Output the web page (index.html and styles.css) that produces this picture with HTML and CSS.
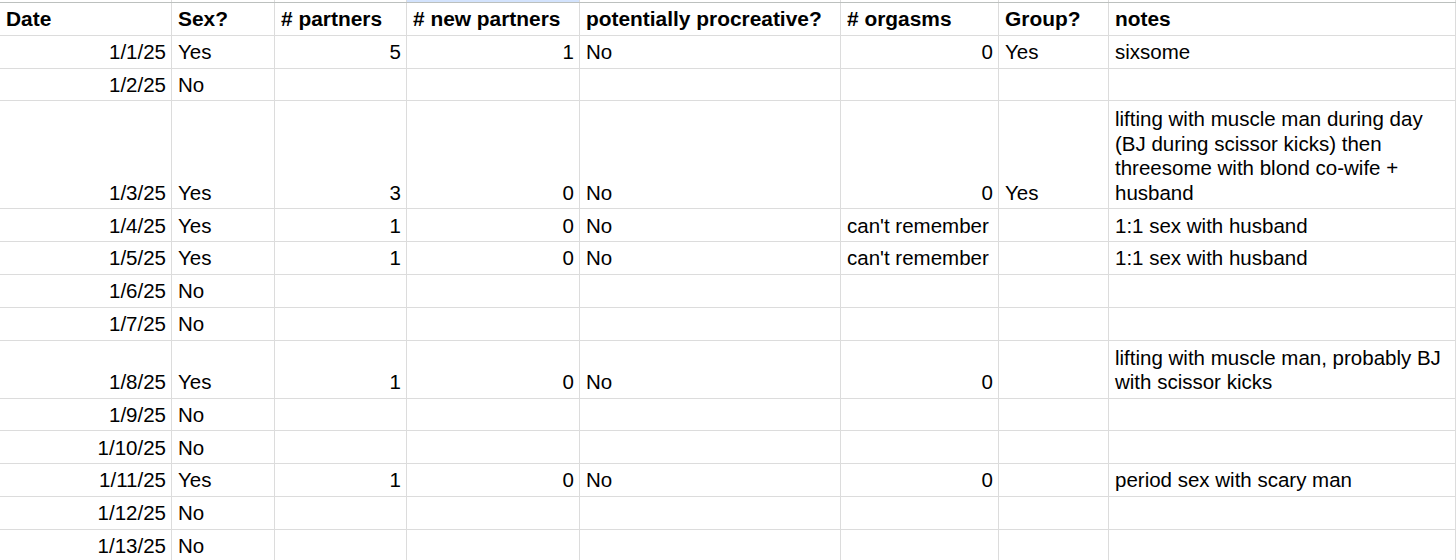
FILE: index.html
```html
<!DOCTYPE html>
<html>
<head>
<meta charset="utf-8">
<link rel="stylesheet" href="styles.css">
</head>
<body>
<div class="sheet">
  <div class="row strip">
    <div class="cell"></div><div class="cell"></div><div class="cell"></div><div class="cell sel"></div><div class="cell"></div><div class="cell"></div><div class="cell"></div><div class="cell"></div>
  </div>
  <div class="row head">
    <div class="cell">Date</div><div class="cell">Sex?</div><div class="cell"># partners</div><div class="cell"># new partners</div><div class="cell">potentially procreative?</div><div class="cell"># orgasms</div><div class="cell">Group?</div><div class="cell">notes</div>
  </div>
  <div class="row">
    <div class="cell num">1/1/25</div><div class="cell">Yes</div><div class="cell num">5</div><div class="cell num">1</div><div class="cell">No</div><div class="cell num">0</div><div class="cell">Yes</div><div class="cell">sixsome</div>
  </div>
  <div class="row">
    <div class="cell num">1/2/25</div><div class="cell">No</div><div class="cell"></div><div class="cell"></div><div class="cell"></div><div class="cell"></div><div class="cell"></div><div class="cell"></div>
  </div>
  <div class="row tall">
    <div class="cell num">1/3/25</div><div class="cell">Yes</div><div class="cell num">3</div><div class="cell num">0</div><div class="cell">No</div><div class="cell num">0</div><div class="cell">Yes</div><div class="cell wrap">lifting with muscle man during day (BJ during scissor kicks) then threesome with blond co-wife + husband</div>
  </div>
  <div class="row">
    <div class="cell num">1/4/25</div><div class="cell">Yes</div><div class="cell num">1</div><div class="cell num">0</div><div class="cell">No</div><div class="cell">can't remember</div><div class="cell"></div><div class="cell">1:1 sex with husband</div>
  </div>
  <div class="row">
    <div class="cell num">1/5/25</div><div class="cell">Yes</div><div class="cell num">1</div><div class="cell num">0</div><div class="cell">No</div><div class="cell">can't remember</div><div class="cell"></div><div class="cell">1:1 sex with husband</div>
  </div>
  <div class="row">
    <div class="cell num">1/6/25</div><div class="cell">No</div><div class="cell"></div><div class="cell"></div><div class="cell"></div><div class="cell"></div><div class="cell"></div><div class="cell"></div>
  </div>
  <div class="row">
    <div class="cell num">1/7/25</div><div class="cell">No</div><div class="cell"></div><div class="cell"></div><div class="cell"></div><div class="cell"></div><div class="cell"></div><div class="cell"></div>
  </div>
  <div class="row mid">
    <div class="cell num">1/8/25</div><div class="cell">Yes</div><div class="cell num">1</div><div class="cell num">0</div><div class="cell">No</div><div class="cell num">0</div><div class="cell"></div><div class="cell wrap">lifting with muscle man, probably BJ with scissor kicks</div>
  </div>
  <div class="row">
    <div class="cell num">1/9/25</div><div class="cell">No</div><div class="cell"></div><div class="cell"></div><div class="cell"></div><div class="cell"></div><div class="cell"></div><div class="cell"></div>
  </div>
  <div class="row">
    <div class="cell num">1/10/25</div><div class="cell">No</div><div class="cell"></div><div class="cell"></div><div class="cell"></div><div class="cell"></div><div class="cell"></div><div class="cell"></div>
  </div>
  <div class="row">
    <div class="cell num">1/11/25</div><div class="cell">Yes</div><div class="cell num">1</div><div class="cell num">0</div><div class="cell">No</div><div class="cell num">0</div><div class="cell"></div><div class="cell">period sex with scary man</div>
  </div>
  <div class="row">
    <div class="cell num">1/12/25</div><div class="cell">No</div><div class="cell"></div><div class="cell"></div><div class="cell"></div><div class="cell"></div><div class="cell"></div><div class="cell"></div>
  </div>
  <div class="row">
    <div class="cell num">1/13/25</div><div class="cell">No</div><div class="cell"></div><div class="cell"></div><div class="cell"></div><div class="cell"></div><div class="cell"></div><div class="cell"></div>
  </div>
</div>
</body>
</html>
```
FILE: styles.css
```css
html, body {
  margin: 0;
  padding: 0;
  background: #ffffff;
  overflow: hidden;
}

.sheet {
  width: 1456px;
  font-family: "Liberation Sans", Arial, sans-serif;
  font-size: 20.5px;
  color: #000000;
}

.row {
  display: grid;
  grid-template-columns: 172px 103px 132px 173px 261px 158px 110px 347px;
  height: 32.8px;
  box-sizing: border-box;
}

.row.strip {
  height: 3px;
  border-bottom: 1px solid #bcc0be;
}

.row.tall {
  height: 108px;
}

.row.mid {
  height: 58px;
}

.cell {
  box-sizing: border-box;
  border-right: 1px solid #dcdcdc;
  border-bottom: 1px solid #dcdcdc;
  padding: 0 5px 3px 6px;
  line-height: 24.5px;
  display: flex;
  align-items: flex-end;
  white-space: nowrap;
  overflow: hidden;
}

.strip .cell {
  border-bottom: none;
  padding: 0;
}

.strip .cell.sel {
  background: #d3e3fd;
}

.head .cell {
  font-weight: bold;
  font-size: 20.9px;
}

.cell.num {
  justify-content: flex-end;
}

.cell.wrap {
  white-space: normal;
}
```
